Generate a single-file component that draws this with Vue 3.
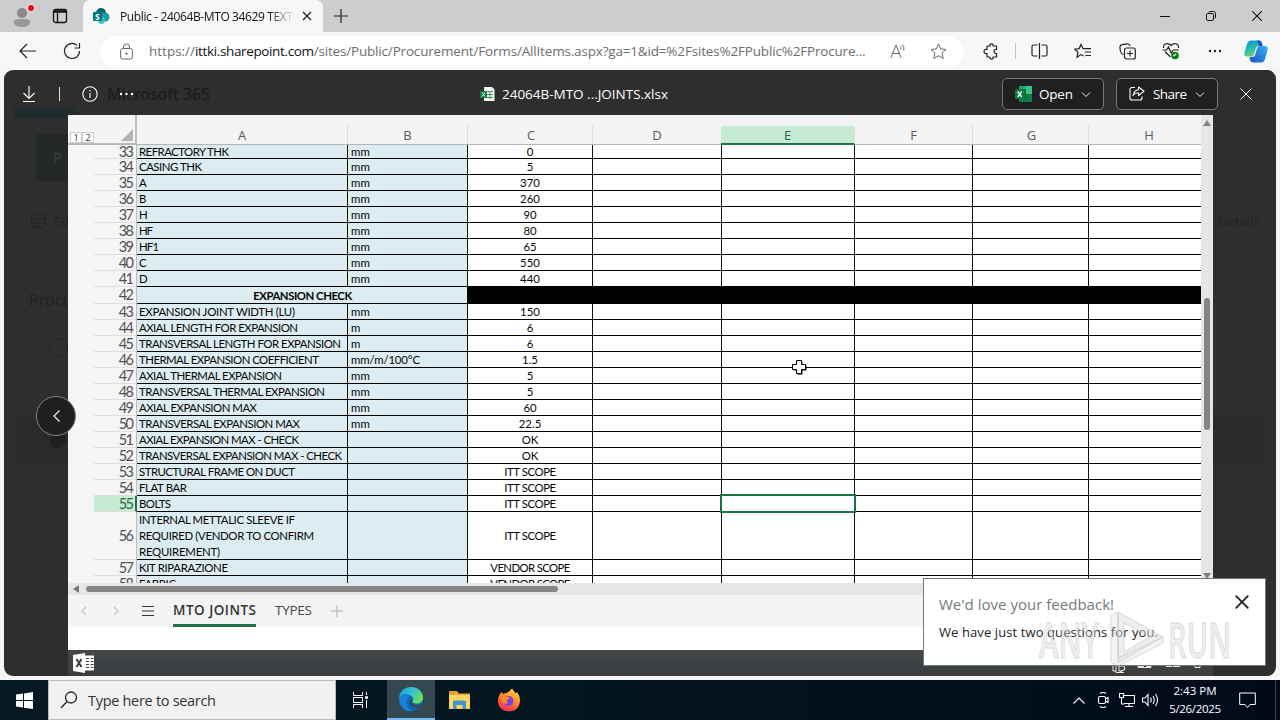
<script setup>
const vFit = {
  mounted(el, { value }) {
    if (!value) return
    const n = el.textContent.length
    el.style.letterSpacing = (value - el.getBoundingClientRect().width) / Math.max(1, n - 1) + 'px'
  },
}

const columns = ['A', 'B', 'C', 'D', 'E', 'F', 'G', 'H']

const rows = [
  { n: 33, a: [['REFRACTORY THK', 90]], b: 'mm', c: '0', cls: 'first' },
  { n: 34, a: [['CASING THK', 63]], b: 'mm', c: '5' },
  { n: 35, a: [['A', 0]], b: 'mm', c: '370' },
  { n: 36, a: [['B', 0]], b: 'mm', c: '260' },
  { n: 37, a: [['H', 0]], b: 'mm', c: '90' },
  { n: 38, a: [['HF', 14]], b: 'mm', c: '80' },
  { n: 39, a: [['HF1', 20]], b: 'mm', c: '65' },
  { n: 40, a: [['C', 0]], b: 'mm', c: '550' },
  { n: 41, a: [['D', 0]], b: 'mm', c: '440' },
  { n: 42, merged: 'EXPANSION CHECK', cls: 'section' },
  { n: 43, a: [['EXPANSION JOINT WIDTH (LU)', 156]], b: 'mm', c: '150' },
  { n: 44, a: [['AXIAL LENGTH FOR EXPANSION', 159]], b: 'm', c: '6' },
  { n: 45, a: [['TRANSVERSAL LENGTH FOR EXPANSION', 202]], b: 'm', c: '6' },
  { n: 46, a: [['THERMAL EXPANSION COEFFICIENT', 180]], b: 'mm/m/100°C', bw: 69, c: '1.5' },
  { n: 47, a: [['AXIAL THERMAL EXPANSION', 143]], b: 'mm', c: '5' },
  { n: 48, a: [['TRANSVERSAL THERMAL EXPANSION', 186]], b: 'mm', c: '5' },
  { n: 49, a: [['AXIAL EXPANSION MAX', 118]], b: 'mm', c: '60' },
  { n: 50, a: [['TRANSVERSAL EXPANSION MAX', 161]], b: 'mm', c: '22.5' },
  { n: 51, a: [['AXIAL EXPANSION MAX - CHECK', 160]], b: '', c: 'OK' },
  { n: 52, a: [['TRANSVERSAL EXPANSION MAX - CHECK', 203]], b: '', c: 'OK' },
  { n: 53, a: [['STRUCTURAL FRAME ON DUCT', 156]], b: '', c: 'ITT SCOPE', cw: 52 },
  { n: 54, a: [['FLAT BAR', 48]], b: '', c: 'ITT SCOPE', cw: 52 },
  { n: 55, a: [['BOLTS', 32]], b: '', c: 'ITT SCOPE', cw: 52, cls: 'active' },
  {
    n: 56,
    a: [['INTERNAL METTALIC SLEEVE IF', 156], ['REQUIRED (VENDOR TO CONFIRM', 175], ['REQUIREMENT)', 81]],
    b: '', c: 'ITT SCOPE', cw: 52, cls: 'tall',
  },
  { n: 57, a: [['KIT RIPARAZIONE', 89]], b: '', c: 'VENDOR SCOPE', cw: 80 },
  { n: 58, a: [['FABRIC', 37]], b: '', c: 'VENDOR SCOPE', cw: 80 },
]
</script>

<template>
  <div class="screen">
    <!-- Browser tab strip -->
    <header class="tabstrip">
      <div class="profile">
        <svg width="32" height="32" viewBox="0 0 32 32">
          <circle cx="16" cy="13" r="5" fill="#8a8785" />
          <path d="M8 22c0-3 3-3 8-3s8 0 8 3-3 5-8 5-8-2-8-5z" fill="#9a9795" />
          <circle cx="25" cy="8" r="4.4" fill="#e4dada" /><circle cx="25" cy="8" r="3" fill="#e3111b" />
        </svg>
      </div>
      <div class="spaces">
        <svg width="16" height="16" viewBox="0 0 16 16" fill="none" stroke="#111" stroke-width="1.3">
          <rect x="1.5" y="1.5" width="13" height="13" rx="2" /><path d="M1.5 3.500h13" stroke-width="2.500" /><path d="M5.500 5v9.500" />
        </svg>
      </div>
      <div class="tab">
        <svg class="fav" width="17" height="16" viewBox="0 0 17 16">
          <circle cx="8" cy="5" r="5" fill="#036c70" /><circle cx="12" cy="9" r="4.5" fill="#1a9ba1" />
          <circle cx="8.5" cy="12.5" r="3.4" fill="#37c6d0" /><rect y="4" width="9" height="9" rx="1" fill="#03787c" />
          <text x="2" y="11.5" class="badge-letter">S</text>
        </svg>
        <span class="tab-title"><span v-fit="173">Public - 24064B-MTO 34629 TEXT</span></span>
        <svg width="10" height="10" viewBox="0 0 10 10" stroke="#222" stroke-width="1.3"><path d="M1 1l8 8M9 1L1 9" /></svg>
      </div>
      <svg class="plus" width="14" height="14" viewBox="0 0 14 14" stroke="#222" stroke-width="1.2"><path d="M7 0v14M0 7h14" /></svg>
      <div class="winctl">
        <svg width="10" height="10" viewBox="0 0 10 10" stroke="#111"><path d="M0 5.5h10" /></svg>
        <svg width="10" height="10" viewBox="0 0 10 10" stroke="#111" fill="none"><rect x=".5" y="2.5" width="7" height="7" rx="1.3" /><path d="M2.5 1.5q.5-1 1.5-1h3.5q2 0 2 2V6q0 1-1 1.500" /></svg>
        <svg width="10" height="10" viewBox="0 0 10 10" stroke="#111" stroke-width="1.1"><path d="M0 0l10 10M10 0L0 10" /></svg>
      </div>
    </header>

    <!-- Address toolbar -->
    <nav class="toolbar">
      <span class="tb first-btn"><svg width="18" height="16" viewBox="0 0 18 16" class="ink"><path d="M17 8H1.500M8 1L1 8l7 7" /></svg></span>
      <span class="tb"><svg width="18" height="18" viewBox="0 0 18 18" class="ink"><path d="M16.500 9A7.500 7.500 0 1 1 14 3.400M16.500 1v5h-5" /></svg></span>
      <div class="pill">
        <svg class="lock" width="13" height="17" viewBox="0 0 13 17" fill="none" stroke="#666"><rect x=".6" y="5.500" width="11.800" height="10.500" rx="2" /><path d="M3.500 5.500V4a3 3 0 0 1 6 0v1.500" /><circle cx="6.500" cy="10.700" r=".7" fill="#666" /></svg>
        <span class="url"><span v-fit="46">https://</span><b v-fit="119">ittki.sharepoint.com</b><span v-fit="552">/sites/Public/Procurement/Forms/AllItems.aspx?ga=1&amp;id=%2Fsites%2FPublic%2FProcure...</span></span>
        <svg class="read" width="17" height="16" viewBox="0 0 17 16" fill="none" stroke="#666"><path d="M1 14.500L6 2l5 12.500M2.600 10.500h6.800M10 3.500q1.400 1.300 1 3M12 1.500q2.700 2.500 1.800 6" /></svg>
        <svg class="star" width="17" height="17" viewBox="0 0 17 17" fill="none" stroke="#666" stroke-linejoin="round"><path d="M8.500 1l2.200 4.900 5.300.6-3.900 3.600 1.100 5.300-4.700-2.700-4.700 2.700 1.100-5.300L1 6.500l5.300-.6z" /></svg>
      </div>
      <span class="tb ext"><svg width="17" height="17" viewBox="0 0 17 17" class="ink"><path d="M4 3h3q-.5-2.200 1.500-2.200T10 3h3.500v3.500q-2.500-.3-2.500 1.800t2.500 2V14H10q.3 2.200-1.500 2.200T7 14H4v-3.500Q1 11 1 8.500t3-2z" stroke-linejoin="round" /></svg></span>
      <span class="sep"></span>
      <span class="tb"><svg width="17" height="16" viewBox="0 0 17 16" class="ink"><path d="M6.500 2H2.500q-1.500 0-1.500 1.500v8Q1 13 2.500 13h4M10.500 2h4q1.500 0 1.500 1.500v8q0 1.500-1.500 1.500h-4M8.500 0v16" /></svg></span>
      <span class="tb"><svg width="18" height="17" viewBox="0 0 18 17" class="ink"><path d="M9.500 13L7 11.600l-4 2.700.9-5L.8 6.200l4.400-.6L7 1.500l2 4.100h8M11 9h6M11.500 12.500H17" /></svg></span>
      <span class="tb"><svg width="17" height="17" viewBox="0 0 17 17" class="ink"><path d="M4.500 11.500Q2 11 1.500 8.500L.9 4.500Q.7 2 3 1.600L8 .8q2.500-.3 3 2.200" /><rect x="5.500" y="5" width="10.800" height="11" rx="2" /><path d="M11 7.500v6M8 10.500h6" /></svg></span>
      <span class="tb"><svg width="18" height="18" viewBox="0 0 18 18" class="ink"><path d="M1.500 6C1 1 6.500.5 9 3.500 11.500.5 17 1 16.500 6M3 9.500L8.500 15M.5 8h4l2-3 2.700 6L11 8h6" /><circle cx="13" cy="13.500" r="3.800" fill="#107c10" stroke="none" /><path d="M11.300 14l3-2" stroke="#dfd" /></svg></span>
      <span class="tb"><svg width="14" height="4" viewBox="0 0 14 4" fill="#222"><circle cx="2" cy="2" r="1.200" /><circle cx="7" cy="2" r="1.200" /><circle cx="12" cy="2" r="1.200" /></svg></span>
      <span class="copilot">
        <svg width="24" height="23" viewBox="0 0 24 23">
          <defs>
            <linearGradient id="cpA" x1="0" y1="0" x2="0.3" y2="1"><stop offset="0" stop-color="#168dd8" /><stop offset=".5" stop-color="#22b7b0" /><stop offset="1" stop-color="#67cf7a" /></linearGradient>
            <linearGradient id="cpB" x1="1" y1="0" x2="0" y2="1"><stop offset="0" stop-color="#39b5ee" /><stop offset="1" stop-color="#1c4fcf" /></linearGradient>
          </defs>
          <path d="M7 .5h8q2 0 2.700 2L18.500 6h-4q-2 0-2.600 2l-2 6.500q-.5 2-2.500 2H3q-3.500 0-2.500-4L3 4Q4 .5 7 .5z" fill="url(#cpA)" />
          <path d="M13 .5h2q2 0 2.700 2L18.500 6h-3z" fill="#1457c8" />
          <path d="M17 22.500H9q-2 0-2.700-2L5.500 17h3q2 0 2.600-2l2-7q.5-2 2.500-2H21q3.500 0 2.500 4L21 19q-1 3.500-4 3.500z" fill="url(#cpB)" />
        </svg>
      </span>
    </nav>

    <!-- File viewer -->
    <main class="viewer">
      <div class="ghost" aria-hidden="true">
        <span class="g-title"><span v-fit="103">Microsoft 365</span></span>
        <span class="g-strip"></span>
        <span class="g-btn">P</span>
        <span class="g-edit"><svg width="15" height="14" viewBox="0 0 15 14" fill="none" stroke="#222"><rect x=".5" y=".5" width="14" height="13" rx="2" /><path d="M.5 5h14M.5 9h14M6 5v8" /></svg>Ed</span>
        <span class="g-proc">Procu</span>
        <span class="g-ring"></span>
        <span class="g-card"></span>
        <span class="g-dot"></span>
        <span class="g-details">Details</span>
      </div>

      <div class="vhead">
        <div class="vleft">
          <svg width="14" height="18" viewBox="0 0 14 18" class="white"><path d="M7 1v12M1.500 8L7 13.500 12.500 8M1 16.500h12" /></svg>
          <i class="vsep"></i>
          <svg width="16" height="16" viewBox="0 0 16 16" class="white"><circle cx="8" cy="8" r="7.200" /><path d="M8 7v5M8 4v1.500" /></svg>
          <svg class="vdots" width="15" height="4" viewBox="0 0 15 4" fill="#fff"><circle cx="2" cy="2" r="1.200" /><circle cx="7.500" cy="2" r="1.200" /><circle cx="13" cy="2" r="1.200" /></svg>
        </div>
        <div class="vtitle">
          <svg width="15" height="14" viewBox="0 0 15 14"><path d="M4 0h8l2.500 2.500V14H4z" fill="#f4f4f4" /><path d="M7 4.500h6M7 7.500h6M7 10.500h6M10 4v8" stroke="#3d9464" /><rect y="4" width="7" height="7" rx=".6" fill="#107c41" /><path d="M2 5.500l3 4M5 5.500l-3 4" stroke="#fff" /></svg>
          <span v-fit="166">24064B-MTO ...JOINTS.xlsx</span>
        </div>
        <button class="vbtn open">
          <svg width="17" height="16" viewBox="0 0 17 16"><rect x="4" width="13" height="16" rx="1" fill="#21a366" /><rect x="10" width="7" height="8" fill="#33c481" /><rect x="4" y="8" width="13" height="8" fill="#107c41" /><path d="M4 3h7v10H4z" fill="#0d6a38" /><rect y="3.500" width="9.500" height="9.500" rx="1" fill="#107c41" /><path d="M2.700 5.500l4 5.500M6.700 5.500l-4 5.500" stroke="#fff" stroke-width="1.300" /></svg>
          <span v-fit="34">Open</span>
          <svg class="chev" width="10" height="6" viewBox="0 0 10 6" stroke="#eee" fill="none"><path d="M1 .5l4 4 4-4" /></svg>
        </button>
        <button class="vbtn share">
          <svg width="16" height="15" viewBox="0 0 16 15" class="white"><path d="M6 1.500H3Q1 1.500 1 3.500v8.500q0 2 2 2h8q2 0 2-2v-1.500M9.500 1v2.800Q5 4 4 9.500q2-2.700 5.500-2.700v2.700L15 5.200z" stroke-linejoin="round" /></svg>
          <span v-fit="34">Share</span>
          <svg class="chev" width="10" height="6" viewBox="0 0 10 6" stroke="#eee" fill="none"><path d="M1 .5l4 4 4-4" /></svg>
        </button>
        <svg class="vclose" width="12" height="12" viewBox="0 0 12 12" stroke="#fff"><path d="M.5.5l11 11M11.500.5l-11 11" /></svg>
      </div>

      <section class="book">
        <div class="gridwrap">
          <div class="sheet">
            <div class="colhead">
              <div class="corner">
                <span class="lvl">1</span><span class="lvl">2</span>
                <svg width="12" height="12" viewBox="0 0 12 12"><path d="M12 0v12H0z" fill="#b3b3b3" /></svg>
              </div>
              <div v-for="c in columns" :key="c" class="ch" :class="['c' + c, { on: c === 'E' }]">{{ c }}</div>
            </div>
            <div v-for="r in rows" :key="r.n" class="row" :class="r.cls">
              <div class="gut"></div>
              <div class="rh"><span v-fit="15">{{ r.n }}</span></div>
              <template v-if="r.merged">
                <div class="merged"><span v-fit="99">{{ r.merged }}</span></div>
                <div class="blackout"></div>
              </template>
              <template v-else>
                <div class="cell tint lines"><div v-for="l in r.a" :key="l[0]" class="line"><span v-fit="l[1]">{{ l[0] }}</span></div></div>
                <div class="cell tint"><span v-fit="r.bw || (r.b === 'mm' ? 19 : 0)">{{ r.b }}</span></div>
                <div class="cell mid"><span v-fit="r.cw">{{ r.c }}</span></div>
                <div class="cell"></div>
                <div class="cell e"><i v-if="r.n === 55" class="selection"></i></div>
                <div class="cell"></div>
                <div class="cell"></div>
                <div class="cell last"></div>
              </template>
            </div>
          </div>
          <div class="vscroll">
            <svg width="8" height="6" viewBox="0 0 8 6"><path d="M4 0l4 6H0z" fill="#808080" /></svg>
            <i></i>
            <svg class="down" width="8" height="6" viewBox="0 0 8 6"><path d="M4 6l4-6H0z" fill="#808080" /></svg>
          </div>
        </div>
        <div class="hscroll">
          <svg width="6" height="8" viewBox="0 0 6 8"><path d="M0 4l6-4v8z" fill="#777" /></svg><i></i>
        </div>
        <div class="sheets">
          <svg class="s1" width="6" height="10" viewBox="0 0 6 10" fill="none" stroke="#c4c4c4" stroke-width="1.300"><path d="M5 1L1 5l4 4" /></svg>
          <svg class="s2" width="6" height="10" viewBox="0 0 6 10" fill="none" stroke="#c4c4c4" stroke-width="1.300"><path d="M1 1l4 4-4 4" /></svg>
          <svg class="s3" width="12" height="10" viewBox="0 0 12 10" stroke="#333"><path d="M0 .5h12M0 5h12M0 9.500h12" /></svg>
          <span class="st current"><span v-fit="83">MTO JOINTS</span></span>
          <span class="st"><span v-fit="37">TYPES</span></span>
          <svg class="s4" width="12" height="12" viewBox="0 0 12 12" stroke="#b0b0b0"><path d="M6 0v12M0 6h12" /></svg>
        </div>
        <div class="blank"></div>
        <footer class="status">
          <svg width="22" height="20" viewBox="0 0 22 20"><rect x="11" y="2.500" width="10" height="15" fill="#fff" /><path d="M13 5.500h3M17.500 5.500h3M13 8.500h3M17.500 8.500h3M13 11.500h3M17.500 11.500h3M13 14.500h3M17.500 14.500h3" stroke="#3d4042" /><path d="M0 2L12 0v20L0 18z" fill="#fff" /><path d="M3.500 6l5 8M8.500 6l-5 8" stroke="#3d4042" stroke-width="2" /></svg>
          <svg class="stat-icons" width="92" height="12" viewBox="0 0 92 12" fill="none" stroke="#e8e8e8"><path d="M1 3v6h3M4 4v6.500h8M7 4h5l1 3-3 2H7zM8 10l5-3" /><path d="M26 1h13v4.500H26z" fill="#ddd" /><path d="M30 2l3 3 3-3" stroke="#333" /><path d="M54 4h6M61 4h7" stroke-width="2" /><path d="M83 0v5.500h5V0" /></svg>
        </footer>
      </section>

      <span class="prev"><svg width="9" height="14" viewBox="0 0 9 14" class="white"><path d="M7.500 1.500L2 7l5.500 5.500" /></svg></span>
      <svg class="cursor" width="15" height="15" viewBox="0 0 15 15"><path d="M5.500 1.500h5v4h4v5h-4v4h-5v-4h-4v-5h4z" fill="#000" /><path d="M4.500.5h5v4h4v5h-4v4h-5v-4h-4v-5h4z" fill="#fff" stroke="#000" /></svg>
    </main>

    <aside class="feedback">
      <h4><span v-fit="175">We'd love your feedback!</span></h4>
      <p><span v-fit="219">We have just two questions for you.</span></p>
      <svg width="14" height="14" viewBox="0 0 14 14" stroke="#222" stroke-width="1.800"><path d="M.7.7l12.600 12.600M13.300.7L.7 13.300" /></svg>
    </aside>
    <svg class="mark" width="200" height="62" viewBox="0 0 200 62" fill="rgba(222,222,222,.5)" stroke="rgba(190,190,190,.55)">
      <text x="2" y="51" textLength="60" lengthAdjust="spacingAndGlyphs">ANY</text>
      <path fill-rule="evenodd" d="M81 5l45 25-45 26zM87 16v29l26-15z" />
      <path d="M74 9l7-4v46l45-21v6L81 59l-7-4z" fill="rgba(220,220,220,.3)" />
      <text x="131" y="51" textLength="63" lengthAdjust="spacingAndGlyphs">RUN</text>
    </svg>

    <!-- Windows taskbar -->
    <footer class="taskbar">
      <span class="start"><svg width="17" height="17" viewBox="0 0 17 17" fill="#fff"><path d="M0 2.500l7-1V8H0zM8 1.400L17 0v8H8zM0 9h7v6.500l-7-1zM8 9h9v8l-9-1.300z" /></svg></span>
      <div class="search">
        <svg width="18" height="18" viewBox="0 0 18 18" fill="none" stroke="#222" stroke-width="1.300"><circle cx="11" cy="6.500" r="5.500" /><path d="M7 10.500L1 17" /></svg>
        <span v-fit="128">Type here to search</span>
      </div>
      <span class="app"><svg width="17" height="16" viewBox="0 0 17 16" fill="none" stroke="#fff"><path d="M1.500 0v3.500h9V0M1.500 16v-3.500h9V16M1.500 5.500h9v5h-9zM14.500 0v3M14.500 8v8" /><path d="M13 5.500h3" stroke-width="2.500" /></svg></span>
      <span class="app running">
        <svg width="26" height="26" viewBox="0 0 26 26">
          <defs><linearGradient id="edge" x1="0" y1="0" x2="1" y2=".5"><stop offset="0" stop-color="#1b9de2" /><stop offset=".55" stop-color="#35c1d0" /><stop offset="1" stop-color="#6be05c" /></linearGradient></defs>
          <circle cx="13" cy="13" r="12" fill="#0d67b8" />
          <path d="M1.200 11C2 5 7 1 13 1c7 0 12 5 12 10.500 0 4-3 6-6.500 6-3 0-4.500-1-4-2 2-3-.5-7-5.500-7-4 0-7 1.500-7.800 2.500z" fill="url(#edge)" />
          <path d="M1.200 11C4 6 11 7.500 12 10c-5 2-5 13 3 15C6 26.500.5 20 1.200 11z" fill="#1482d8" />
          <path d="M14 16c1 3 6 4.500 10 2.200L21.500 22c-6 1-10-2-10-6 0-2 1-3 2-3.500 1.500 1 .5 2.500.5 3.500z" fill="#304f5c" />
        </svg>
      </span>
      <span class="app"><svg width="23" height="20" viewBox="0 0 23 20"><path d="M1 1h8l2 2.500h11V8H1z" fill="#e8a33a" /><path d="M1 5h21v14H1z" fill="#ffd45e" /><path d="M5 19v-7q0-1.500 1.500-1.500h10Q18 10.500 18 12v7h-3.500v-4h-6v4z" fill="#3f95cf" /></svg></span>
      <span class="app">
        <svg width="24" height="24" viewBox="0 0 24 24">
          <defs><linearGradient id="fox" x1=".8" y1="0" x2=".3" y2="1"><stop offset="0" stop-color="#ffe23e" /><stop offset=".45" stop-color="#ff8a2a" /><stop offset="1" stop-color="#f0265e" /></linearGradient></defs>
          <path d="M4.500 4L6 6q1.500-1 3.500-1L12 3.500 15 .5q2 2.500 3.500 5L20 4q3.500 4.500 3 9.500-1 9.500-11 10Q2 23 1 14 .7 8 4.500 4z" fill="url(#fox)" /><circle cx="11.500" cy="13" r="5" fill="#7542e5" /><path d="M5 9q5-2 8 1l-3 2q-1 2 1.500 3-4 2-6.500-1z" fill="#ff8a22" />
        </svg>
      </span>
      <div class="tray">
        <svg width="12" height="7" viewBox="0 0 12 7" class="white"><path d="M.5 6.500L6 1l5.500 5.500" /></svg>
        <svg width="12" height="16" viewBox="0 0 12 16" class="white"><rect x="1.500" y="4.500" width="7" height="7" rx="1.500" /><path d="M8.500 7l2.500-1.500v5L8.500 9M3 1.500Q6-.5 9 1.500M3 14.500q3 2 6 0" /></svg>
        <svg width="16" height="14" viewBox="0 0 16 14" class="white"><path d="M5 2.500h10.500v8H5M10 10.500v3M6 13.500h8M.5.500h4v4h-4zM2.500 4.500v6.500h3" /></svg>
        <svg width="17" height="14" viewBox="0 0 17 14" class="white"><path d="M.5 5H3l3-3.500v11L3 9H.5zM8.500 4.500q1.500 2.500 0 5M11 3q2.500 4 0 8M13.500 1q4 6 0 12" /></svg>
      </div>
      <div class="clock"><span v-fit="43">2:43 PM</span><span v-fit="52">5/26/2025</span></div>
      <svg class="notif" width="17" height="17" viewBox="0 0 17 17" fill="none" stroke="#fff"><path d="M.7 1h15.600v11.500H11L8.500 15.500 6 12.500H.7z" /></svg>
      <i class="peek"></i>
    </footer>
  </div>
</template>

<style>
html, body { margin: 0; overflow: hidden; }
</style>

<style scoped>
.screen { width: 1280px; height: 720px; position: relative; overflow: hidden; background: #f5f5f6; display: flex; flex-direction: column; font-family: "Open Sans", "Noto Sans", sans-serif; font-size: 13px; color: #111; box-sizing: border-box; }
.screen * { box-sizing: border-box; }
svg { display: block; flex: none; }
span { white-space: nowrap; }
.ink { fill: none; stroke: #222; stroke-width: 1.2; }
.white { fill: none; stroke: #fff; stroke-width: 1.1; }

.tabstrip { height: 32px; flex: none; background: #cdcdcd; display: flex; align-items: center; }
.profile { width: 32px; margin-left: 6px; }
.spaces { margin-left: 14px; width: 31px; }
.tab { width: 240px; height: 32px; background: #f7f7f7; border-radius: 7px 7px 0 0; display: flex; align-items: center; padding: 0 16px 0 10px; }
.badge-letter { font: bold 8.5px "Open Sans", sans-serif; fill: #fff; }
.tab-title { margin-left: 10px; width: 173px; margin-right: 9px; font-size: 12px; color: #111; mask-image: linear-gradient(90deg, #000 86%, transparent 101%); }
.plus { margin-left: 11px; }
.winctl { margin-left: auto; margin-right: 18px; display: flex; gap: 36px; }

.toolbar { height: 38px; flex: none; display: flex; align-items: center; background: #f7f7f7; }
.tb { width: 44px; display: flex; justify-content: center; }
.first-btn { margin-left: 6px; }
.pill { margin-left: 6px; width: 864px; height: 31px; border-radius: 16px; background: #fff; display: flex; align-items: center; padding-left: 20px; }
.url { display: flex; margin-left: 16px; width: 717px; font-size: 13.5px; color: #6e6e6e; }
.url b { font-weight: 400; color: #111; }
.read { margin-left: 24px; }
.star { margin-left: 23px; }
.ext { margin-left: 5px; }
.sep { width: 1px; height: 16px; background: #c4c4c4; margin: 0 1px 0 2px; }
.copilot { width: 38px; display: flex; justify-content: center; }

.viewer { position: relative; height: 606px; flex: none; margin: 0 4px 4px; width: 1272px; background: #2e2e2e; border-radius: 9px; overflow: hidden; }
.ghost > span { position: absolute; color: #212121; }
.ghost .g-title { left: 103px; top: 13px; font-size: 16px; font-weight: 600; color: #1d1d1d; }
.ghost .g-strip { left: 10px; top: 38px; width: 60px; height: 10px; background: #202b30; }
.ghost .g-btn { left: 32px; top: 64px; width: 60px; height: 47px; background: #242829; color: #363c3d; padding: 13px 0 0 17px; font-size: 15px; font-weight: 600; }
.ghost .g-edit { left: 27px; top: 142px; display: flex; gap: 8px; align-items: center; font-size: 13px; }
.ghost .g-proc { left: 25px; top: 219px; font-size: 16px; }
.ghost .g-ring { left: 45px; top: 268px; width: 19px; height: 19px; border: 1px solid #242424; border-radius: 50%; }
.ghost .g-card { left: 12px; top: 345px; width: 1248px; height: 48px; background: #2b2b2b; }
.ghost .g-dot { left: 46px; top: 362px; width: 16px; height: 16px; border-radius: 50%; background: #1f1f1f; }
.ghost .g-details { left: 1214px; top: 142px; font-size: 13px; }

.vhead { position: relative; height: 45px; display: flex; align-items: center; padding-top: 2px; }
.vleft { width: 476px; display: flex; align-items: center; padding-left: 18px; }
.vsep { width: 1px; height: 14px; background: #ddd; margin: 0 22px 0 23px; }
.vdots { margin-left: 21px; }
.vtitle { width: 522px; display: flex; align-items: center; gap: 7px; color: #fff; font-size: 13.5px; }
.vbtn { width: 102px; height: 32px; border: 1px solid #777; border-radius: 5px; background: #202020; color: #fff; display: flex; align-items: center; padding: 0 0 0 12px; font: 13.5px "Open Sans", sans-serif; }
.open span { margin-left: 7px; }
.open .chev { margin-left: 8px; }
.share { margin-left: 12px; }
.share span { margin-left: 8px; }
.share .chev { margin-left: 9px; }
.chev { margin-top: 3px; }
.vclose { margin-left: 22px; }

.book { position: relative; margin-left: 64px; width: 1145px; height: 561px; display: flex; flex-direction: column; background: #f5f5f5; }
.gridwrap { height: 468px; display: flex; overflow: hidden; flex: none; }
.sheet { width: 1133px; height: 468px; overflow: hidden; font-family: Lato, "Open Sans", sans-serif; font-size: 11.4px; color: #060606; background: #fff; }
.colhead, .row { display: grid; grid-template-rows: 100%; }
.colhead { grid-template-columns: 69px 211px 120px 125px 129px 133px 118px 116px 112px; height: 30px; background: #f4f4f4; border-bottom: 1px solid #b5b5b5; }
.corner { display: flex; align-items: flex-end; border-right: 2px solid #bdbdbd; border-bottom: 1px solid #bbb; padding-left: 2px; }
.lvl { width: 12px; height: 11px; border: 1px solid #ccc; background: #fff; font: 9px/9px "Open Sans", sans-serif; text-align: center; color: #333; }
.corner svg { margin: 0 2px 2px auto; }
.ch { margin-top: 11px; border-right: 1px solid #dcdcdc; text-align: center; font: 13px/18px "Open Sans", sans-serif; color: #5a5a5a; }
.ch.on { background: #c6ead4; color: #1d6b41; border-bottom: 2px solid #217346; margin-left: -1px; margin-bottom: -1px; position: relative; z-index: 1; }
.ch.cC, .ch.cG { padding-left: 2px; }
.ch.cH { padding-left: 8px; border-right: 0; }
.row { grid-template-columns: 26px 43px 211px 120px 125px 129px 133px 118px 116px 112px; height: 16px; }
.gut { background: #f5f5f5; }
.rh { background: #f5f5f5; border-bottom: 1px solid #dedede; border-right: 1px solid #bdbdbd; display: flex; align-items: center; justify-content: flex-end; padding-right: 4px; font-size: 14.5px; line-height: 14px; color: #505050; overflow: hidden; }
.active .rh { background: #c6ead4; color: #1d6b41; border-right: 2px solid #217346; padding-right: 3px; }
.cell { position: relative; border-right: 1px solid #111; border-bottom: 1px solid #000; display: flex; align-items: center; padding-left: 2px; line-height: 15px; min-width: 0; }
.cell.last { border-right: 0; }
.cell.tint { background: #dcecf1; }
.cell.tint + .tint { padding-left: 3px; }
.cell.mid { justify-content: center; padding: 0; }
.cell.lines { flex-direction: column; align-items: flex-start; justify-content: center; }
.line { line-height: 15px; }
.row.first { height: 14px; }
.row.first .cell { align-items: flex-end; line-height: 13px; }
.row.first .cell.lines { align-items: flex-start; justify-content: flex-end; }
.row.first .line { line-height: 13px; }
.row.section { height: 17px; }
.row.tall { height: 48px; }
.row.tall .line { line-height: 16px; }
.merged { grid-column: 3 / 5; background: #dcecf1; border-bottom: 1px solid #000; text-align: center; font-weight: 700; line-height: 18px; }
.blackout { grid-column: 5 / 11; background: #000; margin-left: -1px; }
.selection { position: absolute; z-index: 2; left: -2px; top: -2px; right: -2px; bottom: -2px; border: 2px solid #1a7343; }

.vscroll { width: 12px; background: #e6e6e6; display: flex; flex-direction: column; align-items: center; padding-top: 5px; }
.vscroll i { width: 6px; height: 132px; background: #858585; border-radius: 3px; margin-top: 172px; }
.vscroll .down { margin-top: 143px; }
.hscroll { height: 12px; flex: none; background: #e6e6e6; display: flex; align-items: center; padding-left: 5px; }
.hscroll i { width: 472px; height: 6px; background: #858585; border-radius: 3px; margin-left: 7px; }
.sheets { height: 32px; flex: none; display: flex; align-items: center; padding-left: 13px; background: #f4f4f4; color: #444; font-size: 13.5px; }
.s2 { margin-left: 26px; }
.s3 { margin-left: 23px; }
.st { height: 32px; line-height: 30px; margin-left: 19px; }
.st.current { border-bottom: 3px solid #217346; font-weight: 600; color: #333; width: 83px; }
.s4 { margin-left: 19px; }
.blank { height: 23px; flex: none; background: #fff; }
.status { flex: 1; background: linear-gradient(#454849, #3a3d3f); display: flex; align-items: center; padding-left: 5px; }
.stat-icons { margin-left: 1017px; margin-top: 10px; }

.prev { position: absolute; left: 32px; top: 326px; width: 40px; height: 40px; border-radius: 50%; background: #1f1f1f; border: 1px solid #858585; display: flex; align-items: center; justify-content: center; }
.cursor { position: absolute; left: 788px; top: 290px; }

.feedback { position: absolute; left: 923px; top: 578px; width: 343px; height: 88px; background: #fff; border: 1px solid #777; padding: 13px 15px; }
.feedback h4 { margin: 0; font-size: 15px; line-height: 24px; font-weight: 400; color: #737b7a; }
.feedback p { margin: 6px 0 0; font-size: 13px; line-height: 20px; color: #222; }
.feedback svg { position: absolute; right: 16px; top: 16px; }
.mark { position: absolute; left: 1037px; top: 607px; font: 600 49px "Open Sans", sans-serif; }

.taskbar { height: 40px; flex: none; display: flex; align-items: center; background: linear-gradient(90deg, #061922 0, #03151f 45%, #020f1d 75%, #010a18); color: #fff; }
.start { width: 48px; display: flex; justify-content: center; }
.search { width: 288px; height: 40px; background: #f1f1f1; border: 1px solid #bbb; display: flex; align-items: center; padding-left: 11px; gap: 10px; font-size: 14.5px; color: #333; }
.app { width: 49px; height: 40px; display: flex; align-items: center; justify-content: center; }
.app.running { background: #344850; border-bottom: 2px solid #76b9ed; width: 48px; margin-left: 2px; }
.tray { margin-left: auto; display: flex; align-items: center; gap: 12px; }
.tray svg:nth-child(n + 3) { margin-left: -2px; }
.tray svg:nth-child(4) { margin-left: -5px; }
.clock { width: 72px; display: flex; flex-direction: column; align-items: center; font-size: 11.5px; line-height: 18px; }
.notif { margin-left: 8px; }
.peek { width: 1px; height: 40px; background: #3d4450; margin: 0 4px 0 19px; }
</style>
